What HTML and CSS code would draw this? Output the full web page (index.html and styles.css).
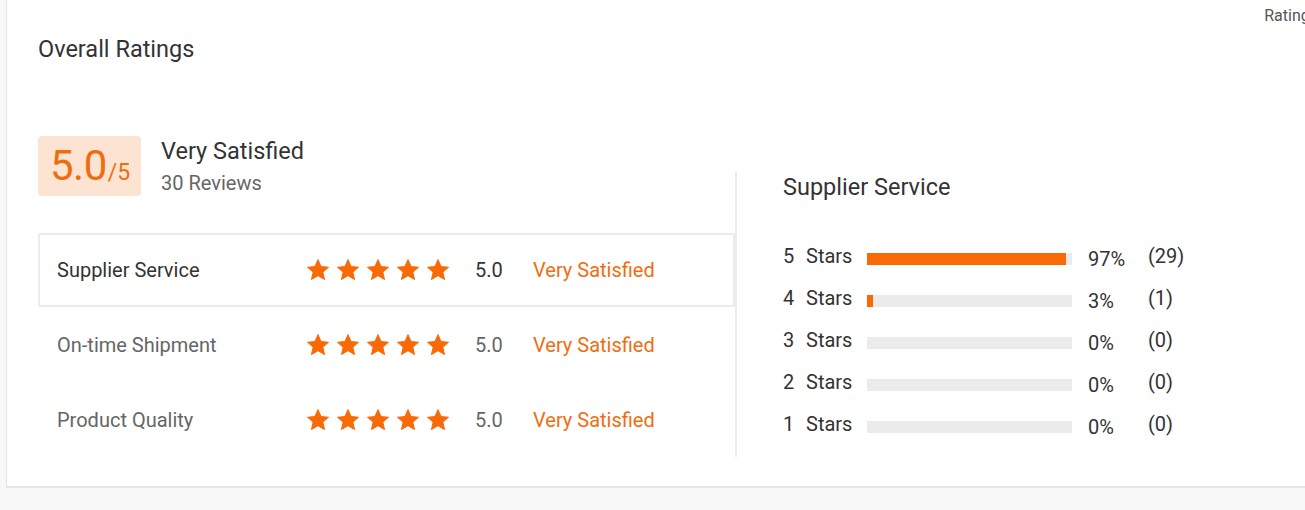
FILE: index.html
```html
<!DOCTYPE html>
<html lang="en">
<head>
<meta charset="utf-8">
<title>Overall Ratings</title>
<link rel="stylesheet" href="styles.css">
</head>
<body>
<svg width="0" height="0" class="defs" aria-hidden="true">
  <defs>
    <symbol id="star" viewBox="0 0 24 24">
      <path d="M12 1.6l3.05 6.95 7.45.7-5.65 4.95 1.7 7.35L12 17.7l-6.55 3.85 1.7-7.35L1.5 9.25l7.45-.7z" stroke-linejoin="round" stroke-width="1" stroke="currentColor" fill="currentColor"/>
    </symbol>
  </defs>
</svg>
<div class="card">
  <div class="tabs"><span class="tab">Ratings</span></div>
  <h2 class="title">Overall Ratings</h2>
  <div class="main">
    <div class="left">
      <div class="summary">
        <div class="score"><span class="big">5.0</span><span class="of">/5</span></div>
        <div class="summary-text">
          <div class="verdict">Very Satisfied</div>
          <div class="reviews">30 Reviews</div>
        </div>
      </div>
      <div class="table">
        <div class="row active">
          <div class="label">Supplier Service</div>
          <div class="stars">
            <svg class="star"><use href="#star"/></svg><svg class="star"><use href="#star"/></svg><svg class="star"><use href="#star"/></svg><svg class="star"><use href="#star"/></svg><svg class="star"><use href="#star"/></svg>
          </div>
          <div class="value">5.0</div>
          <div class="level">Very Satisfied</div>
        </div>
        <div class="row">
          <div class="label">On-time Shipment</div>
          <div class="stars">
            <svg class="star"><use href="#star"/></svg><svg class="star"><use href="#star"/></svg><svg class="star"><use href="#star"/></svg><svg class="star"><use href="#star"/></svg><svg class="star"><use href="#star"/></svg>
          </div>
          <div class="value">5.0</div>
          <div class="level">Very Satisfied</div>
        </div>
        <div class="row">
          <div class="label">Product Quality</div>
          <div class="stars">
            <svg class="star"><use href="#star"/></svg><svg class="star"><use href="#star"/></svg><svg class="star"><use href="#star"/></svg><svg class="star"><use href="#star"/></svg><svg class="star"><use href="#star"/></svg>
          </div>
          <div class="value">5.0</div>
          <div class="level">Very Satisfied</div>
        </div>
      </div>
    </div>
    <div class="right">
      <div class="right-title">Supplier Service</div>
      <div class="dist">
        <div class="dist-row"><span class="num">5</span><span class="word">Stars</span><div class="bar"><div class="fill" style="width:97%"></div></div><span class="pct">97%</span><span class="cnt">(29)</span></div>
        <div class="dist-row"><span class="num">4</span><span class="word">Stars</span><div class="bar"><div class="fill" style="width:3%"></div></div><span class="pct">3%</span><span class="cnt">(1)</span></div>
        <div class="dist-row"><span class="num">3</span><span class="word">Stars</span><div class="bar"><div class="fill" style="width:0%"></div></div><span class="pct">0%</span><span class="cnt">(0)</span></div>
        <div class="dist-row"><span class="num">2</span><span class="word">Stars</span><div class="bar"><div class="fill" style="width:0%"></div></div><span class="pct">0%</span><span class="cnt">(0)</span></div>
        <div class="dist-row"><span class="num">1</span><span class="word">Stars</span><div class="bar"><div class="fill" style="width:0%"></div></div><span class="pct">0%</span><span class="cnt">(0)</span></div>
      </div>
    </div>
  </div>
</div>
</body>
</html>
```

FILE: styles.css
```css
html {
  overflow: hidden;
}
body {
  margin: 0;
  background: #f8f8f8;
  font-family: Roboto, "Liberation Sans", Arial, sans-serif;
  color: #333;
  height: 510px;
}
.defs {
  position: absolute;
  width: 0;
  height: 0;
}
.card {
  margin-left: 6px;
  background: #fff;
  border-left: 1px solid #e4e4e4;
  border-bottom: 2px solid #e6e6e6;
  padding: 0 0 29px 31px;
  overflow: hidden;
}
.tabs {
  display: flex;
  justify-content: flex-end;
  height: 32px;
  margin-right: -13px;
}
.tab {
  font-size: 16px;
  line-height: 32px;
  color: #555;
}
.title {
  margin: 3px 0 0;
  font-size: 23.5px;
  line-height: 28px;
  font-weight: 400;
  color: #333;
}
.main {
  display: flex;
  margin-top: 73px;
}
.left {
  width: 697px;
  flex: none;
}
.summary {
  display: flex;
  align-items: flex-start;
  height: 60px;
}
.score {
  width: 103px;
  height: 60px;
  box-sizing: border-box;
  background: #fde4d2;
  border-radius: 4px;
  padding-left: 12px;
  display: flex;
  align-items: baseline;
  color: #f06d0f;
  line-height: 60px;
}
.big {
  font-size: 42px;
  letter-spacing: -0.5px;
}
.of {
  font-size: 23px;
  margin-left: 1px;
}
.summary-text {
  margin-left: 20px;
}
.verdict {
  font-size: 23.5px;
  line-height: 28px;
  margin-top: 1px;
  color: #333;
}
.reviews {
  font-size: 20px;
  line-height: 26px;
  margin-top: 5px;
  color: #666;
}
.table {
  margin-top: 37px;
}
.row {
  display: flex;
  align-items: center;
  height: 75px;
  box-sizing: border-box;
  border: 2px solid transparent;
  color: #666;
  font-size: 20px;
}
.row.active {
  height: 74px;
  border-color: #ececec;
  color: #333;
}
.label {
  width: 249px;
  padding-left: 17px;
  flex: none;
}
.stars {
  width: 169px;
  flex: none;
  display: flex;
  gap: 6px;
  color: #f96a06;
}
.star {
  width: 24px;
  height: 24px;
  display: block;
}
.value {
  width: 58px;
  flex: none;
}
.level {
  color: #f06d10;
}
.right {
  flex: 1;
  margin-top: 36px;
  border-left: 2px solid #ececec;
  padding-left: 46px;
}
.right-title {
  font-size: 23.5px;
  line-height: 28px;
  margin-top: 1px;
  color: #333;
}
.dist {
  margin-top: 34px;
}
.dist-row {
  display: flex;
  align-items: center;
  height: 42px;
  font-size: 20px;
  color: #333;
}
.num {
  width: 23px;
}
.word {
  width: 61px;
}
.bar {
  width: 205px;
  height: 12px;
  background: #ebebeb;
  margin-top: 5px;
}
.fill {
  height: 100%;
  background: #f96a06;
}
.pct {
  width: 60px;
  margin-left: 16px;
  margin-top: 6px;
}
```
